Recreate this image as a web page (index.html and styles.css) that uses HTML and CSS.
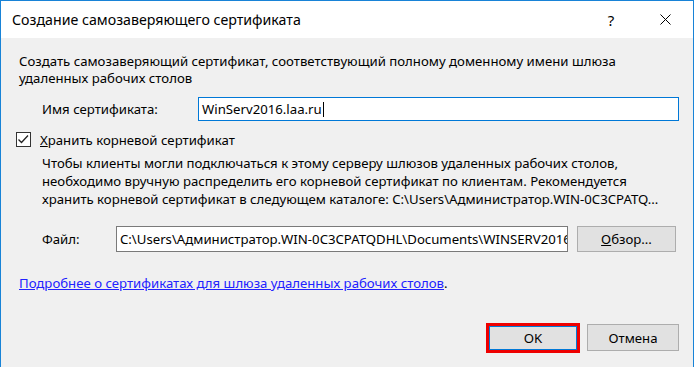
FILE: index.html
```
<!DOCTYPE html>
<html lang="ru">
  <head>
    <meta charset="UTF-8" />
    <title>Создание самозаверяющего сертификата</title>
    <link rel="stylesheet" href="styles.css">
  </head>
  <body>
    <div class="window">
      <div class="titlebar">
        <span class="title">Создание самозаверяющего сертификата</span>
        <span class="tb-btn help">?</span>
        <span class="tb-btn close">
          <svg width="11" height="11" viewBox="0 0 11 11">
            <path d="M0.5 0.5 L10.5 10.5 M10.5 0.5 L0.5 10.5" stroke="#000" stroke-width="1" fill="none" />
          </svg>
        </span>
      </div>
      <div class="content">
        <p class="intro">Создать самозаверяющий сертификат, соответствующий полному доменному имени шлюза<br>удаленных рабочих столов</p>
        <div class="field name-field">
          <span class="label">Имя сертификата:</span>
          <div class="input focused">WinServ2016.laa.ru<span class="caret"></span></div>
        </div>
        <div class="check">
          <span class="box">
            <svg width="13" height="13" viewBox="0 0 13 13">
              <path d="M1.5 6.5 L4.5 9.5 L11 2.5" stroke="#222" stroke-width="1.3" fill="none" />
            </svg>
          </span>
          <span><u>Х</u>ранить корневой сертификат</span>
        </div>
        <p class="note">Чтобы клиенты могли подключаться к этому серверу шлюзов удаленных рабочих столов,<br>необходимо вручную распределить его корневой сертификат по клиентам. Рекомендуется<br>хранить корневой сертификат в следующем каталоге: C:\Users\Администратор.WIN-0C3CPATQ...</p>
        <div class="field file-field">
          <span class="label">Файл:</span>
          <div class="input">C:\Users\Администратор.WIN-0C3CPATQDHL\Documents\WINSERV2016</div>
          <button class="btn browse"><u>О</u>бзор...</button>
        </div>
        <p class="more"><a href="#">Подробнее о сертификатах для шлюза удаленных рабочих столов</a>.</p>
        <div class="footer">
          <button class="btn ok">OK</button>
          <button class="btn">Отмена</button>
        </div>
      </div>
    </div>
  </body>
</html>
```

FILE: styles.css
```
body {
  margin: 0;
  background: #fff;
  font-family: "Noto Sans", Arial, sans-serif;
  font-size: 13.2px;
  color: #000;
}
.window {
  width: 694px;
  height: 367px;
  box-sizing: border-box;
  border: 1px solid #1883d7;
  border-bottom: none;
  display: flex;
  flex-direction: column;
}
.titlebar {
  height: 37px;
  background: #fff;
  display: flex;
  align-items: center;
  padding-left: 11px;
}
.title {
  font-size: 14.2px;
  flex: 1;
}
.tb-btn {
  width: 46px;
  text-align: center;
  display: flex;
  justify-content: center;
}
.help {
  font-size: 15px;
  margin-right: 8px;
}
.close {
  margin-right: 5px;
}
.content {
  flex: 1;
  background: #f0f0f0;
  padding: 15px 14px 0 18px;
}
p {
  margin: 0;
}
.intro {
  line-height: 17px;
  white-space: nowrap;
}
.field {
  display: flex;
  align-items: center;
}
.label {
  margin-left: 23px;
}
.name-field {
  margin-top: 10px;
}
.name-field .label {
  width: 156px;
}
.input {
  background: #fff;
  border: 1px solid #7a7a7a;
  box-sizing: border-box;
  white-space: nowrap;
  overflow: hidden;
  padding-left: 3px;
}
.name-field .input {
  flex: 1;
  height: 24px;
  line-height: 22px;
}
.input.focused {
  border-color: #0078d7;
}
.caret {
  display: inline-block;
  width: 1px;
  height: 15px;
  background: #000;
  vertical-align: -3px;
  margin-left: 1px;
}
.check {
  display: flex;
  align-items: center;
  margin: 11px 0 0 -3px;
  height: 15px;
}
.box {
  width: 15px;
  height: 15px;
  box-sizing: border-box;
  border: 1px solid #333;
  background: #fff;
  display: flex;
  margin-right: 9px;
}
.note {
  margin: 7px 0 0 23px;
  line-height: 18px;
  white-space: nowrap;
}
.file-field {
  margin-top: 18px;
}
.file-field .label {
  width: 74px;
}
.file-field .input {
  width: 452px;
  height: 26px;
  line-height: 24px;
}
.btn {
  font: inherit;
  color: #000;
  background: #e1e1e1;
  border: 1px solid #adadad;
  padding: 0;
}
.browse {
  width: 99px;
  height: 26px;
  margin-left: 9px;
}
.more {
  margin-top: 23px;
  line-height: 17px;
}
.more a {
  color: #2222ff;
}
.footer {
  display: flex;
  justify-content: flex-end;
  gap: 10px;
  margin-top: 32px;
}
.footer .btn {
  width: 92px;
  height: 27px;
}
.footer .ok {
  width: 88px;
  height: 24px;
  margin-top: 2px;
  border-color: #0078d7;
  box-shadow: 0 0 0 3px #ee0000;
}
```
